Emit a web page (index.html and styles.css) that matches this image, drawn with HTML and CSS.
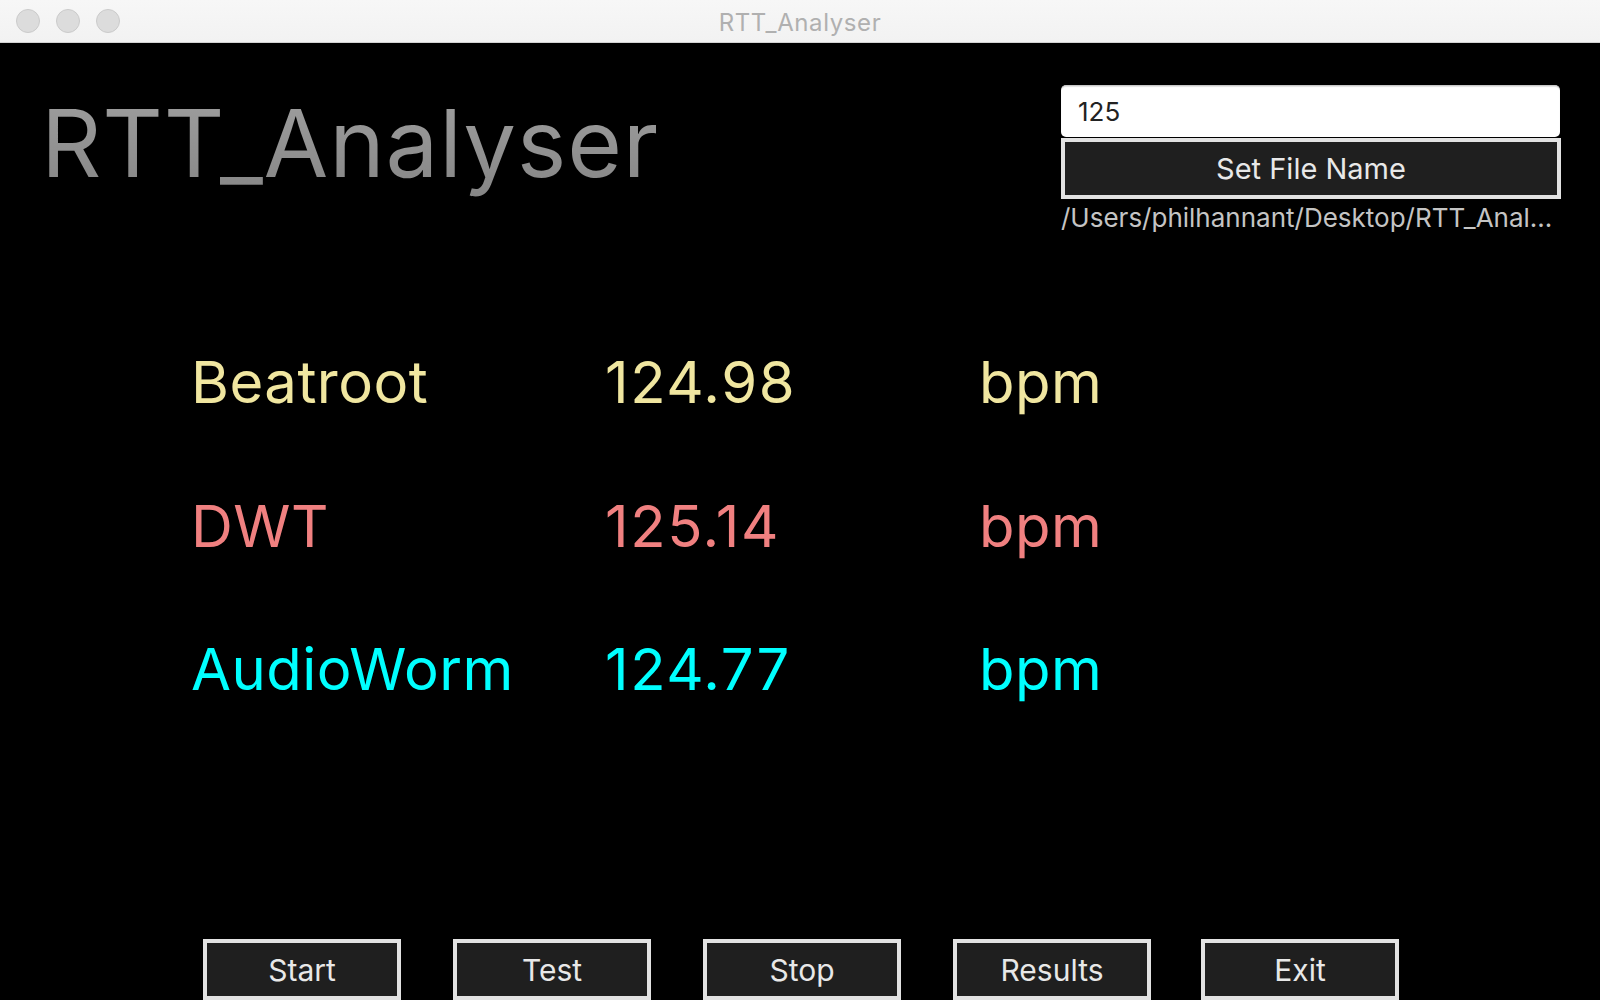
FILE: index.html
```html
<!DOCTYPE html>
<html lang="en">
<head>
<meta charset="utf-8">
<title>RTT_Analyser</title>
<link rel="stylesheet" href="styles.css">
</head>
<body>
<div class="window">
  <div class="titlebar">
    <div class="lights">
      <span class="light"></span>
      <span class="light"></span>
      <span class="light"></span>
    </div>
    <div class="wintitle">RTT_Analyser</div>
    <div class="spacer"></div>
  </div>
  <div class="content">
    <div class="header">
      <h1 class="apptitle">RTT_Analyser</h1>
      <div class="filepanel">
        <div class="input">125</div>
        <div class="btn wide">Set File Name</div>
        <div class="path">/Users/philhannant/Desktop/RTT_Anal...</div>
      </div>
    </div>
    <div class="rows">
      <div class="row beat"><span>Beatroot</span><span class="val">124.98</span><span>bpm</span></div>
      <div class="row dwt"><span>DWT</span><span class="val">125.14</span><span>bpm</span></div>
      <div class="row worm"><span>AudioWorm</span><span class="val">124.77</span><span>bpm</span></div>
    </div>
    <div class="buttons">
      <div class="btn">Start</div>
      <div class="btn">Test</div>
      <div class="btn">Stop</div>
      <div class="btn">Results</div>
      <div class="btn last">Exit</div>
    </div>
  </div>
</div>
</body>
</html>
```
FILE: styles.css
```css
html, body {
  margin: 0;
  padding: 0;
  background: #000;
}
body {
  font-family: Inter, "Noto Sans", "Liberation Sans", sans-serif;
  width: 1600px;
  height: 1000px;
  overflow: hidden;
}
.window {
  width: 1600px;
  height: 1000px;
  display: flex;
  flex-direction: column;
}
.titlebar {
  height: 42px;
  flex: 0 0 42px;
  background: linear-gradient(#f7f7f7, #f2f2f2);
  border-bottom: 1px solid #d2d2d2;
  display: grid;
  grid-template-columns: 1fr auto 1fr;
  align-items: center;
}
.lights {
  display: flex;
  gap: 16px;
  padding-left: 16px;
}
.light {
  width: 22px;
  height: 22px;
  border-radius: 50%;
  background: #dcdcdc;
  border: 1px solid #cbcbcb;
}
.wintitle {
  font-size: 24px;
  color: #b0b0b0;
  letter-spacing: 0.6px;
  padding-top: 3px;
}
.content {
  flex: 1;
  display: flex;
  flex-direction: column;
  background: #000;
}
.header {
  display: flex;
  justify-content: space-between;
  align-items: flex-start;
  padding: 42px 40px 0 41px;
}
.apptitle {
  margin: 1px 0 0 0;
  font-size: 94px;
  font-weight: 400;
  line-height: normal;
  letter-spacing: 0.8px;
  background: linear-gradient(#a0a0a0, #858585);
  -webkit-background-clip: text;
  background-clip: text;
  color: transparent;
}
.filepanel {
  width: 499px;
  display: flex;
  flex-direction: column;
}
.input {
  height: 52px;
  box-sizing: border-box;
  background: #fff;
  border-radius: 5px;
  border-top: 1px solid #c8c8c8;
  box-shadow: inset 0 1px 1px rgba(0,0,0,0.12);
  padding-left: 17px;
  font-size: 26px;
  color: #222;
  display: flex;
  align-items: center;
}
.btn {
  box-sizing: border-box;
  height: 61px;
  background: #1f1f1f;
  border: 4px solid #e2e2e2;
  color: #e8e8e8;
  font-size: 30px;
  display: flex;
  align-items: center;
  justify-content: center;
}
.btn.wide {
  margin-top: 1px;
  width: 500px;
  font-size: 29px;
}
.path {
  margin-top: 3px;
  font-size: 26px;
  color: #c4c4c4;
  white-space: nowrap;
  line-height: 32px;
}
.rows {
  margin-top: 119px;
  padding-left: 191px;
  display: flex;
  flex-direction: column;
  gap: 85.5px;
}
.row {
  display: grid;
  grid-template-columns: 414px 374px auto;
  font-size: 58px;
  line-height: 58px;
  letter-spacing: 0.5px;
}
.row .val {
  letter-spacing: 1.6px;
}
.beat { color: #f0e6a0; }
.dwt { color: #f08080; }
.worm { color: #00ffff; }
.buttons {
  margin-top: auto;
  display: flex;
  gap: 52px;
  padding-left: 203px;
}
.buttons .btn {
  width: 198px;
}
.buttons .btn.last {
  margin-left: -2px;
}
```
